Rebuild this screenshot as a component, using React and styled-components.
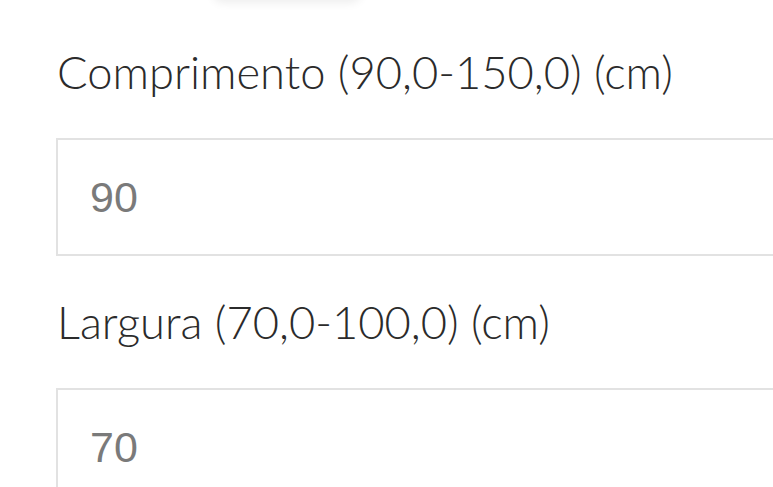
import React from 'react'
import styled, { createGlobalStyle } from 'styled-components'

const GlobalStyle = createGlobalStyle`
  html, body {
    margin: 0;
    background: #fff;
    overflow: hidden;
  }
`

const Page = styled.div`
  width: 773px;
  height: 487px;
  overflow: hidden;
  background: #fff;
`

const TopShadow = styled.div`
  width: 150px;
  height: 24px;
  margin: -24px 0 0 212px;
  border-radius: 12px;
  background: #fff;
  box-shadow: 0 3px 10px rgba(0, 0, 0, 0.07);
`

const Form = styled.form`
  display: flex;
  flex-direction: column;
  padding: 45px 0 0 56px;
`

const Field = styled.div`
  display: flex;
  flex-direction: column;
  gap: 39px;
  margin-bottom: 39px;
`

const Label = styled.label`
  font-family: Lato, "Open Sans", sans-serif;
  font-weight: 300;
  font-size: 45.3px;
  line-height: 54px;
  color: #2b2b2b;
  padding-left: 1px;
`

const Input = styled.input`
  box-sizing: border-box;
  width: 760px;
  height: 118px;
  border: 2px solid #e2e2e2;
  border-right: none;
  padding: 0 0 0 32px;
  font-family: "Liberation Sans", Arial, sans-serif;
  font-weight: 400;
  font-size: 43px;
  color: #7a7a7a;
  background: #fff;
  outline: none;
`

const fields = [
  { id: 'comprimento', label: 'Comprimento (90,0-150,0) (cm)', value: '90' },
  { id: 'largura', label: 'Largura (70,0-100,0) (cm)', value: '70' },
]

const App = () => {
  return (
    <Page>
      <GlobalStyle />
      <TopShadow />
      <Form>
        {fields.map(f => (
          <Field key={f.id}>
            <Label htmlFor={f.id}>{f.label}</Label>
            <Input id={f.id} defaultValue={f.value} />
          </Field>
        ))}
      </Form>
    </Page>
  )
}

export default App
